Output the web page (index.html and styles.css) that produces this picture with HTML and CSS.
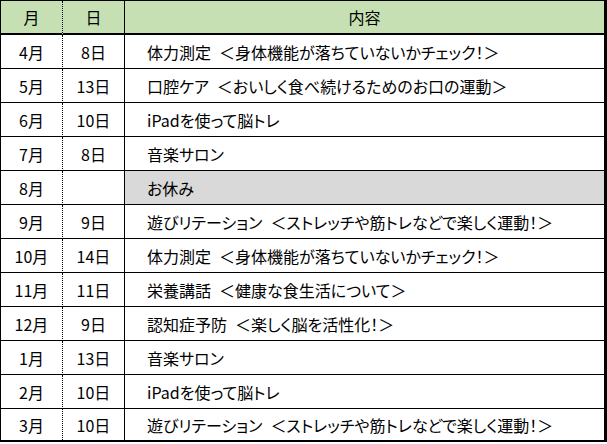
FILE: index.html
```html
<!DOCTYPE html>
<html lang="ja">
<head>
<meta charset="utf-8">
<title>予定表</title>
<link rel="stylesheet" href="styles.css">
</head>
<body>
<div class="sheet">
  <div class="cell head c1">月</div><div class="cell head c2">日</div><div class="cell head c3 center">内容</div>
  <div class="cell c1">4月</div><div class="cell c2">8日</div><div class="cell c3">体力測定&ensp;＜身体機能が落ちていないかチェック！＞</div>
  <div class="cell c1">5月</div><div class="cell c2">13日</div><div class="cell c3">口腔ケア&ensp;＜おいしく食べ続けるためのお口の運動＞</div>
  <div class="cell c1">6月</div><div class="cell c2">10日</div><div class="cell c3">iPadを使って脳トレ</div>
  <div class="cell c1">7月</div><div class="cell c2">8日</div><div class="cell c3">音楽サロン</div>
  <div class="cell c1">8月</div><div class="cell c2"></div><div class="cell c3 off">お休み</div>
  <div class="cell c1">9月</div><div class="cell c2">9日</div><div class="cell c3">遊びリテーション&ensp;＜ストレッチや筋トレなどで楽しく運動！＞</div>
  <div class="cell c1">10月</div><div class="cell c2">14日</div><div class="cell c3">体力測定&ensp;＜身体機能が落ちていないかチェック！＞</div>
  <div class="cell c1">11月</div><div class="cell c2">11日</div><div class="cell c3">栄養講話&ensp;＜健康な食生活について＞</div>
  <div class="cell c1">12月</div><div class="cell c2">9日</div><div class="cell c3">認知症予防&ensp;＜楽しく脳を活性化！＞</div>
  <div class="cell c1">1月</div><div class="cell c2">13日</div><div class="cell c3">音楽サロン</div>
  <div class="cell c1">2月</div><div class="cell c2">10日</div><div class="cell c3">iPadを使って脳トレ</div>
  <div class="cell c1 last">3月</div><div class="cell c2 last">10日</div><div class="cell c3 last">遊びリテーション&ensp;＜ストレッチや筋トレなどで楽しく運動！＞</div>
</div>
</body>
</html>
```
FILE: styles.css
```css
html, body {
  margin: 0;
  padding: 0;
  background: #fff;
}
.sheet {
  box-sizing: border-box;
  width: 607px;
  height: 442px;
  border-top: 1px solid #000;
  border-left: 1px solid #000;
  border-right: 3px solid #000;
  border-bottom: 2px solid #000;
  display: grid;
  grid-template-columns: 62px 62px 479px;
  grid-template-rows: 34px repeat(11, 34px) 31px;
  font-family: "Noto Sans CJK JP", "DejaVu Sans", sans-serif;
  font-size: 16px;
  font-feature-settings: "palt";
  color: #000;
}
.cell {
  box-sizing: border-box;
  display: flex;
  align-items: center;
  border-bottom: 1px solid #000;
  white-space: pre;
  line-height: 1;
}
.c1 {
  justify-content: center;
  border-right: 1px dotted #000;
}
.c2 {
  justify-content: center;
  border-right: 1px solid #000;
}
.c3 {
  padding-left: 22px;
}
.c3.center {
  justify-content: center;
  padding-left: 0;
}
.head {
  background: #c6e0b4;
  border-bottom-width: 2px;
}
.off {
  background: #d9d9d9;
}
.last {
  border-bottom: none;
}
```
